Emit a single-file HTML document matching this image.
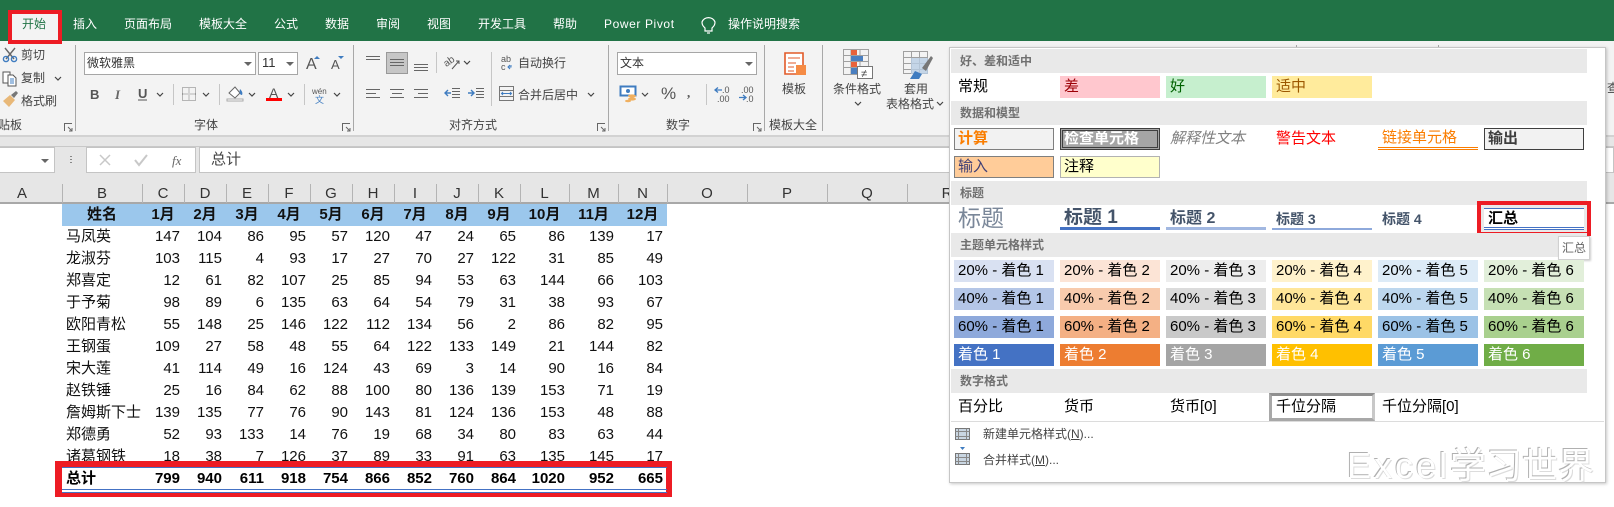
<!DOCTYPE html>
<html lang="zh"><head><meta charset="utf-8"><title>Excel</title>
<style>
html,body{margin:0;padding:0;background:#fff}
body{width:1614px;height:507px;overflow:hidden;position:relative;font-family:"Liberation Sans","Noto Sans CJK SC",sans-serif;color:#000}
div,span{box-sizing:border-box}
.a{position:absolute}
.t{position:absolute;white-space:nowrap;line-height:16px;font-size:12px;color:#444}
.w{color:#fff}
.hd{position:absolute;top:185px;height:18px;line-height:18px;font-size:15px;color:#333;text-align:center}
.vl{position:absolute;top:184px;height:19px;width:1px;background:#b4b4b4}
.sep{position:absolute;top:45px;height:86px;width:1px;background:#a8a8a8}
.box{position:absolute;background:#fff;border:1px solid #a6a6a6}
table{position:absolute;left:62px;top:204px;border-collapse:collapse;table-layout:fixed;width:605px;font-size:15px}
td{height:22px;padding:0 4px 0 0;text-align:right;line-height:22px;white-space:nowrap;overflow:hidden;color:#111}
td:first-child{text-align:left;padding-left:4px}
tr{height:22px}
tr.h td{background:#9bc7ec;font-weight:bold;text-align:center;padding:0;color:#111}
.sh{position:absolute;left:951px;width:636px;height:24px;background:#e9e9e9;color:#707070;font-size:12px;font-weight:bold;line-height:24px;padding-left:9px}
.c{position:absolute;width:100px;height:22px;font-size:15px;line-height:21px;padding-left:4px;white-space:nowrap;overflow:hidden}
.x1{left:954px}.x2{left:1060px}.x3{left:1166px}.x4{left:1272px}.x5{left:1378px}.x6{left:1484px}
.r1{top:260px}.r2{top:288px}.r3{top:316px}.r4{top:344px;color:#fff}
</style></head><body>

<!-- top band -->
<div class="a" style="left:0;top:0;width:1614px;height:41px;background:#217346"></div>
<div class="a" style="left:12px;top:14px;width:46px;height:27px;background:#f3f3f3"></div>
<div class="t" style="left:22px;top:16px;color:#217346">开始</div>
<div class="t w" style="left:73px;top:16px">插入</div>
<div class="t w" style="left:124px;top:16px">页面布局</div>
<div class="t w" style="left:199px;top:16px">模板大全</div>
<div class="t w" style="left:274px;top:16px">公式</div>
<div class="t w" style="left:325px;top:16px">数据</div>
<div class="t w" style="left:376px;top:16px">审阅</div>
<div class="t w" style="left:427px;top:16px">视图</div>
<div class="t w" style="left:478px;top:16px">开发工具</div>
<div class="t w" style="left:553px;top:16px">帮助</div>
<div class="t w" style="left:604px;top:16px;letter-spacing:.6px">Power Pivot</div>
<div class="t w" style="left:728px;top:16px">操作说明搜索</div>

<!-- ribbon -->
<div class="a" style="left:0;top:41px;width:1614px;height:94px;background:#f3f3f3"></div>
<div class="a" style="left:0;top:135px;width:1614px;height:12px;background:#e6e6e6;border-top:2px solid #d2d2d2"></div>
<div class="a" style="left:0;top:146px;width:1614px;height:1px;background:#c8c8c8"></div>
<div class="sep" style="left:75px"></div><div class="sep" style="left:353px"></div><div class="sep" style="left:608px"></div><div class="sep" style="left:764px"></div><div class="sep" style="left:822px"></div>
<div class="a" style="left:1296px;top:45px;width:1px;height:2px;background:#a8a8a8"></div>
<div class="a" style="left:1438px;top:45px;width:1px;height:2px;background:#a8a8a8"></div>

<div class="t" style="left:21px;top:47px">剪切</div>
<div class="t" style="left:21px;top:70px">复制</div>
<div class="t" style="left:21px;top:93px">格式刷</div>
<div class="t" style="left:0;top:117px;width:22px;overflow:hidden;direction:rtl">贴板</div>
<div class="t" style="left:194px;top:117px">字体</div>
<div class="t" style="left:449px;top:117px">对齐方式</div>
<div class="t" style="left:666px;top:117px">数字</div>
<div class="t" style="left:769px;top:117px">模板大全</div>

<div class="box" style="left:84px;top:52px;width:172px;height:23px"></div>
<div class="t" style="left:87px;top:55px;color:#333">微软雅黑</div>
<div class="box" style="left:258px;top:52px;width:40px;height:23px"></div>
<div class="t" style="left:262px;top:55px;font-size:13px;color:#333">11</div>
<div class="a" style="left:386px;top:52px;width:22px;height:22px;background:#c6c6c6;border:1px solid #999"></div>
<div class="t" style="left:518px;top:55px">自动换行</div>
<div class="t" style="left:518px;top:87px">合并后居中</div>
<div class="box" style="left:617px;top:52px;width:140px;height:23px"></div>
<div class="t" style="left:620px;top:55px;color:#333">文本</div>
<div class="t" style="left:661px;top:86px;font-size:17px;color:#555">%</div>
<div class="t" style="left:782px;top:81px">模板</div>
<div class="t" style="left:833px;top:81px">条件格式</div>
<div class="t" style="left:904px;top:81px">套用</div>
<div class="t" style="left:886px;top:96px">表格格式</div>

<!-- ribbon icons -->
<svg class="a" style="left:0;top:0" width="1614" height="507" viewBox="0 0 1614 507" fill="none">
<!-- bulb -->
<g stroke="#fff" stroke-width="1.2"><path d="M704 31v-3c-2-2-3-3-3-6a7 7 0 0 1 13 0c0 3-1 4-3 6v3z" transform="translate(1 0)"/><path d="M707 33h3"/></g>
<!-- scissors -->
<g stroke-width="1.4"><path d="M5 48l9 11M15 48l-9 11" stroke="#666"/><circle cx="6" cy="59" r="2.6" stroke="#3f7cc0"/><circle cx="14" cy="59" r="2.6" stroke="#3f7cc0"/></g>
<!-- copy -->
<g stroke="#555" stroke-width="1"><path d="M3 72h7v11H3z" fill="#fff"/><path d="M8 75h5l3 3v8H8z" fill="#fff"/><path d="M10 79h4M10 81h4M10 83h4" stroke="#3f7cc0"/></g>
<path d="M55 77l3 3 3-3" stroke="#444" stroke-width="1.2"/>
<!-- painter -->
<path d="M3 101l7-6 5 5-6 7z" fill="#e8b878"/><path d="M11 95l5-4 2 2-4 5z" fill="#777"/>
<!-- launchers -->
<g stroke="#666" stroke-width="1"><path d="M64.500 131v-7.500h7.500M68 127l4 4M72 128v3h-3"/><path d="M342.500 131v-7.500h7.500M346 127l4 4M350 128v3h-3"/><path d="M597.500 131v-7.500h7.500M601 127l4 4M605 128v3h-3"/><path d="M753.500 131v-7.500h7.500M757 127l4 4M761 128v3h-3"/></g>
<!-- combo arrows -->
<g fill="#666"><path d="M244 62h8l-4 4zM286 62h8l-4 4zM745 62h8l-4 4z"/></g>
<!-- A up/down -->
<text x="306" y="69" font-size="16" fill="#555" font-family="Liberation Sans">A</text><path d="M314 59l3-3 3 3z" fill="#3f7cc0"/>
<text x="331" y="69" font-size="13" fill="#555" font-family="Liberation Sans">A</text><path d="M338 56h6l-3 3z" fill="#3f7cc0"/>
<!-- B I U -->
<text x="90" y="99" font-size="13" font-weight="bold" fill="#555" font-family="Liberation Sans">B</text>
<text x="115" y="99" font-size="13" font-style="italic" font-weight="bold" fill="#666" font-family="Liberation Serif">I</text>
<text x="138" y="98" font-size="13" font-weight="bold" fill="#555" font-family="Liberation Sans">U</text><path d="M138 100h9" stroke="#555"/>
<g stroke="#444" stroke-width="1.2"><path d="M157 93l3 3 3-3M203 93l3 3 3-3M249 93l3 3 3-3M288 93l3 3 3-3M334 93l3 3 3-3M464 61l3 3 3-3M588 93l3 3 3-3M642 93l3 3 3-3M855 102l3 3 3-3M937 102l3 3 3-3"/></g>
<!-- seps -->
<g stroke="#c6c6c6"><path d="M173.500 84v21M219.500 84v21M304.500 84v21M436.500 52v21M491.500 52v54M706.500 84v21"/></g>
<!-- borders -->
<path d="M182.500 87.500h13v13h-13zM182.500 94h13M189 87.500v13" stroke="#777" stroke-dasharray="1 1"/>
<!-- fill -->
<path d="M229 93l6-6 5 6-5 5z" fill="#fff" stroke="#666"/><path d="M240 89c2 2 3 4 2 6-2 0-3-2-2-6z" fill="#3f7cc0"/><path d="M227 99h16v2h-16z" fill="#fff" stroke="#aaa"/>
<!-- font colour -->
<text x="269" y="98" font-size="14" fill="#555" font-family="Liberation Sans">A</text><path d="M266 98h16v3h-16z" fill="#f00"/>
<!-- wen -->
<text x="312" y="94" font-size="8" fill="#555" font-family="Liberation Sans">wén</text><text x="315" y="103" font-size="9" fill="#3f7cc0" font-family="Noto Sans CJK SC">文</text>
<!-- alignment -->
<g stroke="#666"><path d="M366 56.500h14M366 59.500h14M390 59.500h14M390 62.500h14M390 65.500h14M414 64.500h14M414 67.500h14M414 70.500h14"/>
<path d="M366 89.500h14M366 93.500h10M366 97.500h14M390 89.500h14M392 93.500h10M390 97.500h14M414 89.500h14M418 93.500h10M414 97.500h14"/>
<path d="M452 88.500h8M452 91.500h8M452 94.500h8M452 97.500h8M476 88.500h8M476 91.500h8M476 94.500h8M476 97.500h8"/></g>
<g stroke="#3f7cc0" stroke-width="1.4"><path d="M451 93h-6M448 90l-3 3 3 3M468 93h6M471 90l3 3-3 3"/></g>
<!-- orientation -->
<text x="444" y="64" font-size="10" fill="#555" transform="rotate(-35 450 62)" font-family="Liberation Sans">ab</text><path d="M452 69l7-8M456 61h3v3" stroke="#555"/>
<!-- wrap -->
<text x="501" y="62" font-size="9" fill="#555" font-family="Liberation Sans">ab</text><text x="501" y="70" font-size="9" fill="#555" font-family="Liberation Sans">c</text><path d="M508 67h3v-2M510 69l-2-2 2-2" stroke="#3f7cc0"/>
<!-- merge -->
<path d="M499.500 86.500h14v14h-14zM499.500 90.500h14M499.500 96.500h14" stroke="#777"/><path d="M502 93.500h9M503 92l-1.500 1.500 1.500 1.500M510 92l1.500 1.500-1.500 1.500" stroke="#3f7cc0"/>
<!-- accounting -->
<path d="M620.500 86.500h15v9h-15z" fill="#fff" stroke="#3f7cc0" stroke-width="2"/><circle cx="628" cy="91" r="2" fill="#3f7cc0"/><ellipse cx="632" cy="96" rx="4" ry="1.600" fill="#f0b060"/><ellipse cx="632" cy="99" rx="4" ry="1.600" fill="#f0b060"/><ellipse cx="628" cy="101" rx="3" ry="1.300" fill="#f0b060"/>
<text x="687" y="97" font-size="13" font-weight="bold" fill="#555" font-family="Liberation Serif">,</text>
<!-- dec -->
<g font-family="Liberation Sans" font-size="9" fill="#555"><text x="722" y="93">.0</text><text x="717" y="102">.00</text><text x="741" y="93">.00</text><text x="746" y="102">.0</text></g>
<path d="M722 90h-7M718 87.500l-3 2.500 3 2.500M739 97.500h7M743 95l3 2.500-3 2.500" stroke="#3f7cc0" stroke-width="1.300"/>
<!-- template -->
<path d="M785 53h18v21h-18z" fill="#fff" stroke="#e25a28" stroke-width="1.600"/><path d="M788 58h12M788 63h8M788 67h6M788 71h6" stroke="#e25a28"/><path d="M796 65h10v10h-10z" fill="#f58b45"/>
<!-- cond format -->
<path d="M843.500 49.500h25v25h-25zM843.500 55.500h25M843.500 61.500h25M843.500 67.500h25M851 49.500v25M860 49.500v25" stroke="#a0a0a0"/>
<path d="M851 50h6v5h-6zM851 62h6v5h-6z" fill="#e8623a"/><path d="M851 56h12v5h-12zM851 68h6v6h-6z" fill="#4a7fc0"/>
<path d="M857.500 66.500h15v12h-15z" fill="#fff" stroke="#777"/><text x="861" y="77" font-size="11" fill="#444" font-family="Liberation Sans">≠</text>
<!-- table format -->
<path d="M903.500 51.500h24v22h-24zM903.500 57.500h24M903.500 63.500h24M903.500 69.500h24M911.500 51.500v22M919.500 51.500v22" stroke="#a0a0a0"/>
<path d="M911 58h17v16h-17z" fill="#b8cde4" opacity=".8"/><path d="M922 68l9-12 2 2-7 13z" fill="#777"/><path d="M910 79l5-8 7 3-3 5z" fill="#3f7cc0"/>
</svg>

<!-- formula bar -->
<div class="a" style="left:0;top:147px;width:1614px;height:26px;background:#e6e6e6"></div>
<div class="a" style="left:0;top:147px;width:55px;height:26px;background:#fff;border:1px solid #c4c4c4;border-left:0"></div>
<div class="a" style="left:86px;top:147px;width:110px;height:26px;background:#fff;border:1px solid #c4c4c4"></div>
<div class="a" style="left:199px;top:147px;width:1415px;height:26px;background:#fff;border:1px solid #c4c4c4"></div>
<div class="t" style="left:211px;top:151px;font-size:15px;color:#444;line-height:18px">总计</div>
<svg class="a" style="left:0;top:147px" width="200" height="26" fill="none">
<path d="M41 12h8l-4 4z" fill="#666"/>
<path d="M71 9v1M71 12v1M71 15v1" stroke="#888" stroke-width="2"/>
<path d="M100 8l10 10M110 8l-10 10" stroke="#c8c8c8" stroke-width="1.500"/>
<path d="M135 13l4 5 8-10" stroke="#c8c8c8" stroke-width="2"/>
<text x="172" y="18" font-size="13" font-style="italic" fill="#666" font-family="Liberation Serif">fx</text>
</svg>

<!-- column headers -->
<div class="a" style="left:0;top:173px;width:1614px;height:31px;background:#e6e6e6;border-bottom:2px solid #a8a8a8"></div>
<div class="hd" style="left:2px;width:40px">A</div>
<div class="hd" style="left:62px;width:80px">B</div>
<div class="hd" style="left:142px;width:42px">C</div>
<div class="hd" style="left:184px;width:42px">D</div>
<div class="hd" style="left:226px;width:42px">E</div>
<div class="hd" style="left:268px;width:42px">F</div>
<div class="hd" style="left:310px;width:42px">G</div>
<div class="hd" style="left:352px;width:42px">H</div>
<div class="hd" style="left:394px;width:42px">I</div>
<div class="hd" style="left:436px;width:42px">J</div>
<div class="hd" style="left:478px;width:42px">K</div>
<div class="hd" style="left:520px;width:49px">L</div>
<div class="hd" style="left:569px;width:49px">M</div>
<div class="hd" style="left:618px;width:49px">N</div>
<div class="hd" style="left:667px;width:80px">O</div>
<div class="hd" style="left:747px;width:80px">P</div>
<div class="hd" style="left:827px;width:80px">Q</div>
<div class="hd" style="left:907px;width:80px">R</div>
<div class="vl" style="left:62px"></div><div class="vl" style="left:142px"></div><div class="vl" style="left:184px"></div><div class="vl" style="left:226px"></div><div class="vl" style="left:268px"></div><div class="vl" style="left:310px"></div><div class="vl" style="left:352px"></div><div class="vl" style="left:394px"></div><div class="vl" style="left:436px"></div><div class="vl" style="left:478px"></div><div class="vl" style="left:520px"></div><div class="vl" style="left:569px"></div><div class="vl" style="left:618px"></div><div class="vl" style="left:667px"></div><div class="vl" style="left:747px"></div><div class="vl" style="left:827px"></div><div class="vl" style="left:907px"></div>

<!-- sheet -->
<table>
<colgroup><col style="width:80px"><col style="width:42px"><col style="width:42px"><col style="width:42px"><col style="width:42px"><col style="width:42px"><col style="width:42px"><col style="width:42px"><col style="width:42px"><col style="width:42px"><col style="width:49px"><col style="width:49px"><col style="width:49px"></colgroup>
<tr class="h"><td>姓名</td><td>1月</td><td>2月</td><td>3月</td><td>4月</td><td>5月</td><td>6月</td><td>7月</td><td>8月</td><td>9月</td><td>10月</td><td>11月</td><td>12月</td></tr>
<tr><td>马凤英</td><td>147</td><td>104</td><td>86</td><td>95</td><td>57</td><td>120</td><td>47</td><td>24</td><td>65</td><td>86</td><td>139</td><td>17</td></tr>
<tr><td>龙淑芬</td><td>103</td><td>115</td><td>4</td><td>93</td><td>17</td><td>27</td><td>70</td><td>27</td><td>122</td><td>31</td><td>85</td><td>49</td></tr>
<tr><td>郑喜定</td><td>12</td><td>61</td><td>82</td><td>107</td><td>25</td><td>85</td><td>94</td><td>53</td><td>63</td><td>144</td><td>66</td><td>103</td></tr>
<tr><td>于予菊</td><td>98</td><td>89</td><td>6</td><td>135</td><td>63</td><td>64</td><td>54</td><td>79</td><td>31</td><td>38</td><td>93</td><td>67</td></tr>
<tr><td>欧阳青松</td><td>55</td><td>148</td><td>25</td><td>146</td><td>122</td><td>112</td><td>134</td><td>56</td><td>2</td><td>86</td><td>82</td><td>95</td></tr>
<tr><td>王钢蛋</td><td>109</td><td>27</td><td>58</td><td>48</td><td>55</td><td>64</td><td>122</td><td>133</td><td>149</td><td>21</td><td>144</td><td>82</td></tr>
<tr><td>宋大莲</td><td>41</td><td>114</td><td>49</td><td>16</td><td>124</td><td>43</td><td>69</td><td>3</td><td>14</td><td>90</td><td>16</td><td>84</td></tr>
<tr><td>赵铁锤</td><td>25</td><td>16</td><td>84</td><td>62</td><td>88</td><td>100</td><td>80</td><td>136</td><td>139</td><td>153</td><td>71</td><td>19</td></tr>
<tr><td>詹姆斯下士</td><td>139</td><td>135</td><td>77</td><td>76</td><td>90</td><td>143</td><td>81</td><td>124</td><td>136</td><td>153</td><td>48</td><td>88</td></tr>
<tr><td>郑德勇</td><td>52</td><td>93</td><td>133</td><td>14</td><td>76</td><td>19</td><td>68</td><td>34</td><td>80</td><td>83</td><td>63</td><td>44</td></tr>
<tr><td>诸葛钢铁</td><td>18</td><td>38</td><td>7</td><td>126</td><td>37</td><td>89</td><td>33</td><td>91</td><td>63</td><td>135</td><td>145</td><td>17</td></tr>
</table>

<!-- total row -->
<div class="a" style="left:55px;top:461px;width:617px;height:36px;background:#fff;border:6px solid #ed1c24;border-width:6px 6px 4px 7px"></div>
<div class="a" style="left:62px;top:467px;width:605px;height:1px;background:#4472c4"></div>
<div class="a" style="left:62px;top:489px;width:605px;height:1px;background:#4472c4"></div>
<div class="a" style="left:62px;top:492px;width:605px;height:1px;background:#4472c4"></div>
<table style="top:468px;font-weight:bold">
<colgroup><col style="width:80px"><col style="width:42px"><col style="width:42px"><col style="width:42px"><col style="width:42px"><col style="width:42px"><col style="width:42px"><col style="width:42px"><col style="width:42px"><col style="width:42px"><col style="width:49px"><col style="width:49px"><col style="width:49px"></colgroup>
<tr><td style="color:#000">总计</td><td style="color:#000">799</td><td style="color:#000">940</td><td style="color:#000">611</td><td style="color:#000">918</td><td style="color:#000">754</td><td style="color:#000">866</td><td style="color:#000">852</td><td style="color:#000">760</td><td style="color:#000">864</td><td style="color:#000">1020</td><td style="color:#000">952</td><td style="color:#000">665</td></tr>
</table>

<!-- right of panel -->
<div class="t" style="left:1607px;top:80px;width:7px;overflow:hidden">查</div>

<!-- red box over tab -->
<div class="a" style="left:8px;top:10px;width:54px;height:34px;border:4px solid #ed1c24"></div>

<!-- style gallery -->
<div class="a" style="left:949px;top:47px;width:657px;height:436px;background:#fff;border:1px solid #c6c6c6;box-shadow:1px 1px 3px rgba(0,0,0,.22)"></div>

<div class="sh" style="top:49px">好、差和适中</div>
<div class="c x1" style="top:76px">常规</div>
<div class="c x2" style="top:76px;background:#ffc7ce;color:#9c0006">差</div>
<div class="c x3" style="top:76px;background:#c6efce;color:#006100">好</div>
<div class="c x4" style="top:76px;background:#ffeb9c;color:#9c5700">适中</div>

<div class="sh" style="top:101px">数据和模型</div>
<div class="c x1" style="top:128px;background:#f2f2f2;border:1px solid #7f7f7f;color:#fa7d00;font-weight:bold;padding-left:3px;line-height:19px">计算</div>
<div class="c x2" style="top:128px;background:#a5a5a5;border:3px double #3f3f3f;color:#fff;font-weight:bold;padding-left:1px;line-height:15px">检查单元格</div>
<div class="c x3" style="top:128px;color:#7f7f7f;font-style:italic">解释性文本</div>
<div class="c x4" style="top:128px;color:#f00">警告文本</div>
<div class="c x5" style="top:128px;color:#fa7d00;border-bottom:3px double #fa7d00;line-height:20px">链接单元格</div>
<div class="c x6" style="top:128px;background:#f2f2f2;border:1px solid #3f3f3f;color:#3f3f3f;font-weight:bold;padding-left:3px;line-height:19px">输出</div>
<div class="c x1" style="top:156px;background:#fc9;border:1px solid #7f7f7f;color:#3f3f76;padding-left:3px;line-height:19px">输入</div>
<div class="c x2" style="top:156px;background:#ffc;border:1px solid #b2b2b2;padding-left:3px;line-height:19px">注释</div>

<div class="sh" style="top:181px">标题</div>
<div class="c x1" style="top:207px;font-size:23px;color:#7a8799;line-height:22px;height:26px">标题</div>
<div class="c x2" style="top:208px;font-size:19px;font-weight:bold;color:#44546a;border-bottom:3px solid #4472c4;line-height:20px">标题 1</div>
<div class="c x3" style="top:208px;font-size:16px;font-weight:bold;color:#44546a;border-bottom:3px solid #a2b8e1;line-height:21px">标题 2</div>
<div class="c x4" style="top:208px;font-size:14px;font-weight:bold;color:#44546a;border-bottom:2px solid #8ea9db;line-height:22px">标题 3</div>
<div class="c x5" style="top:208px;font-size:14px;font-weight:bold;color:#44546a;line-height:22px">标题 4</div>

<div class="a" style="left:1477px;top:201px;width:114px;height:35px;background:#e9e9e9;border:4px solid #ed1c24"></div>
<div class="c x6" style="top:208px;background:#fff;border-top:1px solid #4472c4;border-bottom:3px double #4472c4;font-weight:bold;line-height:20px">汇总</div>

<div class="sh" style="top:233px">主题单元格样式</div>
<div class="a" style="left:1558px;top:236px;width:32px;height:24px;background:#fff;border:1px solid #d0d0d0;box-shadow:1px 1px 2px rgba(0,0,0,.2)"></div>
<div class="t" style="left:1562px;top:240px;color:#666">汇总</div>

<div class="c x1 r1" style="background:#d9e1f2">20% - 着色 1</div>
<div class="c x2 r1" style="background:#fce4d6">20% - 着色 2</div>
<div class="c x3 r1" style="background:#ededed">20% - 着色 3</div>
<div class="c x4 r1" style="background:#fff2cc">20% - 着色 4</div>
<div class="c x5 r1" style="background:#ddebf7">20% - 着色 5</div>
<div class="c x6 r1" style="background:#e2efda">20% - 着色 6</div>
<div class="c x1 r2" style="background:#b4c6e7">40% - 着色 1</div>
<div class="c x2 r2" style="background:#f8cbad">40% - 着色 2</div>
<div class="c x3 r2" style="background:#dbdbdb">40% - 着色 3</div>
<div class="c x4 r2" style="background:#ffe699">40% - 着色 4</div>
<div class="c x5 r2" style="background:#bdd7ee">40% - 着色 5</div>
<div class="c x6 r2" style="background:#c6e0b4">40% - 着色 6</div>
<div class="c x1 r3" style="background:#8ea9db">60% - 着色 1</div>
<div class="c x2 r3" style="background:#f4b084">60% - 着色 2</div>
<div class="c x3 r3" style="background:#c9c9c9">60% - 着色 3</div>
<div class="c x4 r3" style="background:#ffd966">60% - 着色 4</div>
<div class="c x5 r3" style="background:#9bc2e6">60% - 着色 5</div>
<div class="c x6 r3" style="background:#a9d08e">60% - 着色 6</div>
<div class="c x1 r4" style="background:#4472c4">着色 1</div>
<div class="c x2 r4" style="background:#ed7d31">着色 2</div>
<div class="c x3 r4" style="background:#a5a5a5">着色 3</div>
<div class="c x4 r4" style="background:#ffc000">着色 4</div>
<div class="c x5 r4" style="background:#5b9bd5">着色 5</div>
<div class="c x6 r4" style="background:#70ad47">着色 6</div>

<div class="sh" style="top:369px">数字格式</div>
<div class="c x1" style="top:396px">百分比</div>
<div class="c x2" style="top:396px">货币</div>
<div class="c x3" style="top:396px">货币[0]</div>
<div class="a" style="left:1269px;top:393px;width:106px;height:28px;background:#fff;border:3px solid #9a9a9a;border-color:#8f8f8f #c8c8c8 #a8a8a8 #a8a8a8"></div>
<div class="c x4" style="top:396px;background:#fff;width:98px">千位分隔</div>
<div class="c x5" style="top:396px">千位分隔[0]</div>
<div class="a" style="left:951px;top:421px;width:653px;height:1px;background:#dcdcdc"></div>

<svg class="a" style="left:955px;top:426px" width="18" height="42" fill="none">
<path d="M.5 2.500h14v11H.5z" fill="#c9d6e2" stroke="#777"/><path d="M.5 5.500h14M.5 10.500h14M3.500 2.500v11M11.500 2.500v11" stroke="#888"/>
<path d="M.5 27.500h14v11H.5z" fill="#c9d6e2" stroke="#777"/><path d="M.5 31.500h14M.5 35.500h14M3.500 27.500v11M11.500 27.500v11" stroke="#888"/><path d="M5 21h5l-2.500 3z" fill="#3f7cc0"/>
</svg>
<div class="t" style="left:983px;top:426px;color:#444">新建单元格样式(<u>N</u>)...</div>
<div class="t" style="left:983px;top:452px;color:#444">合并样式(<u>M</u>)...</div>

<!-- watermark -->
<div class="t" style="left:1347px;top:448px;line-height:36px;font-size:36px;color:#fff;text-shadow:-1px -1px 0 #b0b0b0,1px 1px 0 #dcdcdc"><span style="letter-spacing:3px">Excel</span>学习世界</div>

</body></html>
